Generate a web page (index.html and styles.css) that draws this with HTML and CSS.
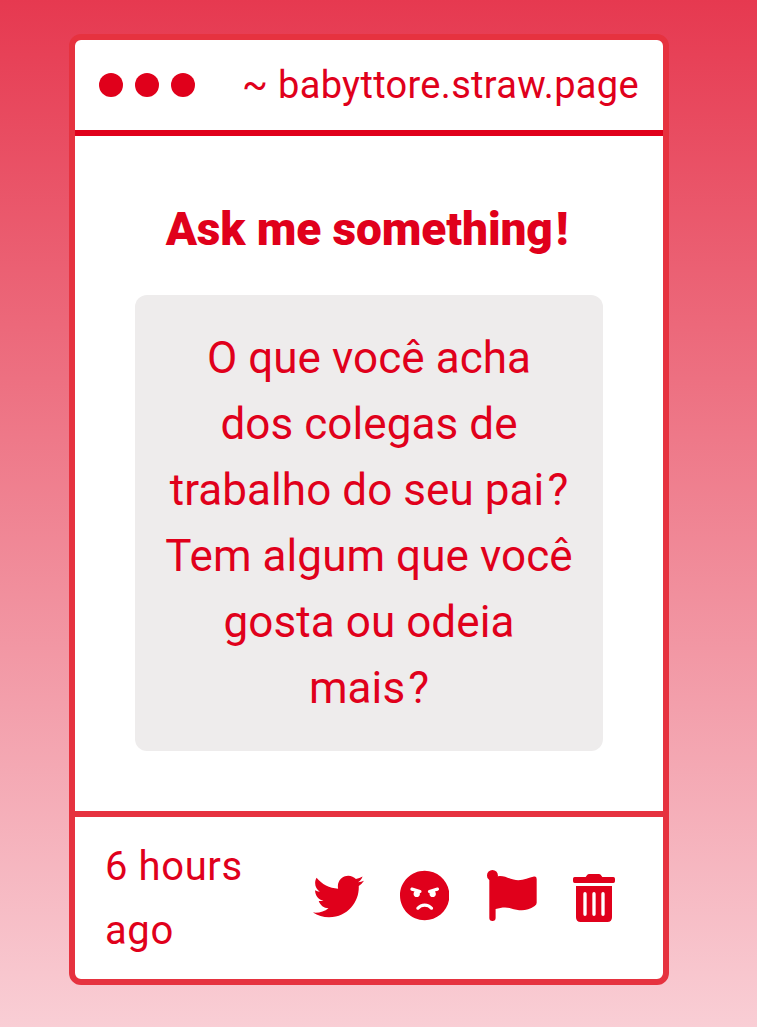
FILE: index.html
```html
<!DOCTYPE html>
<html lang="pt">
<head>
<meta charset="UTF-8">
<title>Ask me something!</title>
<link rel="stylesheet" href="styles.css">
</head>
<body>

<div class="window">
    <div class="title-bar">
        <div class="dots"><span></span><span></span><span></span></div>
        <span class="address">~ babyttore.straw.page</span>
    </div>

    <div class="content">
        <h1>Ask me something<span class="mark">!</span></h1>
        <p class="question">O que você acha<br>dos colegas de<br>trabalho do seu pai<span class="mark">?</span><br>Tem algum que você<br>gosta ou odeia<br>mais<span class="mark">?</span></p>
    </div>

    <div class="footer">
        <span class="time">6 hours ago</span>
        <div class="actions">
            <svg class="twitter" viewBox="0 0 512 512"><path d="M459.37 151.716c.325 4.548.325 9.097.325 13.645 0 138.72-105.583 298.558-298.558 298.558-59.452 0-114.68-17.219-161.137-47.106 8.447.974 16.568 1.299 25.34 1.299 49.055 0 94.213-16.568 130.274-44.832-46.132-.975-84.792-31.188-98.112-72.772 6.498.974 12.995 1.624 19.818 1.624 9.421 0 18.843-1.3 27.614-3.573-48.081-9.747-84.143-51.98-84.143-102.985v-1.299c13.969 7.797 30.214 12.67 47.431 13.319-28.264-18.843-46.781-51.005-46.781-87.391 0-19.492 5.197-37.36 14.294-52.954 51.655 63.675 129.3 105.258 216.365 109.807-1.624-7.797-2.599-15.918-2.599-24.04 0-57.828 46.782-104.934 104.934-104.934 30.213 0 57.502 12.67 76.67 33.137 23.715-4.548 46.456-13.32 66.599-25.34-7.798 24.366-24.366 44.833-46.132 57.827 21.117-2.273 41.584-8.122 60.426-16.243-14.292 20.791-32.161 39.308-52.628 54.253z"/></svg>
            <svg class="angry" viewBox="0 0 496 512"><path d="M248 8C111 8 0 119 0 256s111 248 248 248 248-111 248-248S385 8 248 8zM136 240c0-9.300 4.100-17.500 10.500-23.400l-31-9.300c-8.500-2.500-13.300-11.500-10.700-19.900 2.500-8.500 11.400-13.200 19.900-10.700l80 24c8.500 2.500 13.300 11.500 10.700 19.900-2.100 6.900-8.400 11.400-15.300 11.400-.5 0-1.100-.2-1.700-.2.7 2.700 1.700 5.300 1.700 8.200 0 17.700-14.300 32-32 32S136 257.700 136 240zm168 154.200c-27.800-33.400-84.200-33.400-112.100 0-13.500 16.300-38.200-4.200-24.600-20.500 20-24 49.400-37.700 80.600-37.700s60.600 13.800 80.600 37.700c13.800 16.500-11.100 36.600-24.500 20.500zm76.600-186.900l-31 9.300c6.300 5.800 10.500 14.100 10.500 23.400 0 17.700-14.300 32-32 32s-32-14.300-32-32c0-2.900.9-5.600 1.700-8.200-.6.1-1.100.2-1.700.2-6.900 0-13.200-4.500-15.300-11.400-2.500-8.500 2.300-17.400 10.700-19.900l80-24c8.400-2.500 17.400 2.300 19.900 10.700 2.500 8.500-2.300 17.400-10.800 19.900z"/></svg>
            <svg class="flag" viewBox="0 0 150 154"><circle cx="16.500" cy="16.500" r="16.500"/><path d="M7 20H26C49 14 62 25 80 29C104 35 123 24 142 20Q150 19 150 27V99Q150 105 144 109C119 126 97 123 73 116C55 111 42 114 26 118V145Q26 154 16.500 154Q7 154 7 145Z"/></svg>
            <svg class="trash" viewBox="0 0 126 144"><path d="M5 9H38L43 2Q45 0 48 0H78Q81 0 83 2L88 9H121Q126 9 126 14V22Q126 27 121 27H5Q0 27 0 22V14Q0 9 5 9ZM9 36H117V130Q117 144 103 144H23Q9 144 9 130Z"/><path class="slots" d="M36 59V121M63 59V121M90 59V121"/></svg>
        </div>
    </div>
</div>

</body>
</html>
```
FILE: styles.css
```css
* { box-sizing: border-box; }

body {
    margin: 0;
    height: 1027px;
    padding: 34px 0 0 69px;
    overflow: hidden;
    background: linear-gradient(#e63950, #f9ced5);
    color: #e0001b;
    font-family: Roboto, sans-serif;
}

.window {
    width: 600px;
    height: 951px;
    display: flex;
    flex-direction: column;
    background: #fff;
    border: 6px solid #e6323f;
    border-radius: 12px;
}

/* Title bar */
.title-bar {
    height: 96px;
    padding: 0 24px;
    display: flex;
    justify-content: space-between;
    align-items: center;
    border-bottom: 6px solid #e0001b;
}

.dots {
    display: flex;
    gap: 12px;
}

.dots span {
    width: 24px;
    height: 24px;
    border-radius: 50%;
    background: #e0001b;
}

.address {
    font-size: 38px;
    letter-spacing: 0.32px;
}

/* Question */
.content {
    flex: 1;
    padding: 60px 60px 0;
    text-align: center;
}

h1 {
    margin: 0 0 33px;
    padding-right: 4px;
    font-size: 46px;
    line-height: 66px;
    font-weight: 900;
    letter-spacing: -0.1px;
}

.mark { margin-left: 3px; }

.question {
    margin: 0;
    padding: 30px 0;
    background: #eeecec;
    border-radius: 12px;
    font-size: 44px;
    line-height: 66px;
    letter-spacing: 0.07px;
}

/* Footer */
.footer {
    height: 168px;
    padding: 0 48px 0 30px;
    display: flex;
    justify-content: space-between;
    align-items: center;
    border-top: 6px solid #e6323f;
}

.time {
    width: 160px;
    padding-top: 1px;
    font-size: 40px;
    line-height: 64px;
    letter-spacing: 0.6px;
}

.actions {
    display: flex;
    align-items: center;
    gap: 36px;
    padding-bottom: 5px;
}

.actions svg {
    height: 51px;
    fill: #e0001b;
}

.actions .twitter { margin-top: 2px; }

.actions .angry { margin-right: 2px; }

.actions .trash {
    height: 48px;
    margin-top: 5px;
}

.trash .slots {
    stroke: #fff;
    stroke-width: 10;
    stroke-linecap: round;
}
```
